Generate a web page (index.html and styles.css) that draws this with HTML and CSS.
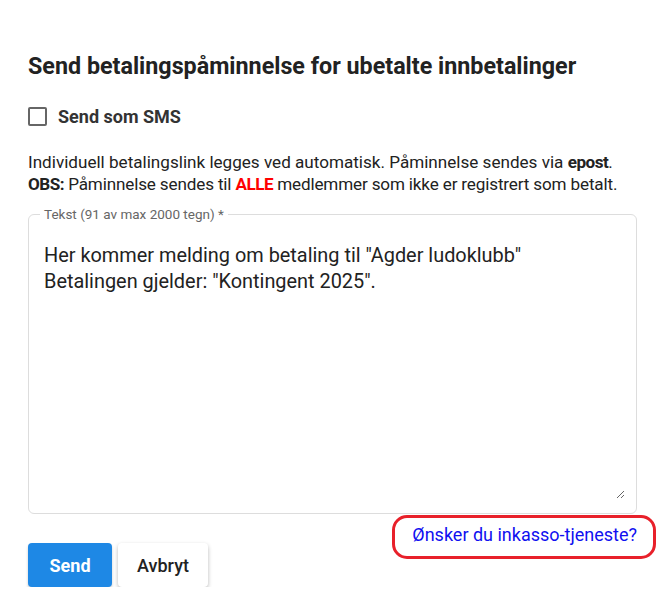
FILE: index.html
```html
<!DOCTYPE html>
<html lang="no">
<head>
<meta charset="utf-8">
<link rel="stylesheet" href="styles.css">
</head>
<body>
<div class="dialog">
  <h2 class="title">Send betalingspåminnelse for ubetalte innbetalinger</h2>
  <label class="check-row">
    <span class="checkbox"></span>
    <span class="check-label">Send som SMS</span>
  </label>
  <p class="info">Individuell betalingslink legges ved automatisk. Påminnelse sendes via <b>epost</b>.<br><span class="obs"><b>OBS:</b> Påminnelse sendes til <b class="red">ALLE</b> medlemmer som ikke er registrert som betalt.</span></p>
  <fieldset class="field">
    <legend class="legend">Tekst (91 av max 2000 tegn) *</legend>
    <textarea class="text">Her kommer melding om betaling til "Agder ludoklubb"
Betalingen gjelder: "Kontingent 2025".</textarea>
  </fieldset>
  <div class="link-row">
    <a class="link" href="#">Ønsker du inkasso-tjeneste?<span class="mark"></span></a>
  </div>
  <div class="buttons">
    <button class="btn btn-primary">Send</button>
    <button class="btn btn-plain">Avbryt</button>
  </div>
</div>
</body>
</html>
```
FILE: styles.css
```css
html, body {
  margin: 0;
  padding: 0;
  background: #fff;
}
body {
  font-family: Roboto, "Liberation Sans", sans-serif;
  color: #222;
}
.dialog {
  padding: 52px 28px 0 28px;
}
.title {
  margin: 0;
  font-size: 23.3px;
  line-height: 28px;
  font-weight: 700;
  color: #222;
}
.check-row {
  display: flex;
  align-items: center;
  gap: 11px;
  margin-top: 25px;
  height: 22px;
}
.checkbox {
  width: 15px;
  height: 15px;
  border: 2px solid #666;
  border-radius: 2px;
  flex: none;
}
.check-label {
  font-size: 18px;
  font-weight: 700;
  color: #333;
}
.info {
  margin: 24px 0 0 0;
  font-size: 17.1px;
  line-height: 22px;
  color: #222;
}
.info b {
  font-weight: 700;
  letter-spacing: -0.5px;
}
.obs {
  letter-spacing: -0.15px;
}
.red { color: #ff0000; }
.field {
  margin: 11px 0 0 0;
  padding: 0 11px 14px 11px;
  border: 1px solid #ddd;
  border-radius: 6px;
}
.legend {
  padding: 0 4px;
  font-size: 13.5px;
  line-height: 16px;
  color: #666;
}
.text {
  display: block;
  box-sizing: border-box;
  width: 100%;
  height: 277px;
  margin: 0;
  padding: 21px 4px 0 4px;
  border: none;
  outline: none;
  resize: vertical;
  font-family: Roboto, "Liberation Sans", sans-serif;
  font-size: 19.9px;
  line-height: 26px;
  color: #222;
  background: transparent;
}
.link-row {
  display: flex;
  justify-content: flex-end;
  margin-top: 11px;
  height: 18px;
}
.link {
  position: relative;
  font-size: 18px;
  line-height: 20px;
  color: #1010f0;
  text-decoration: none;
}
.mark {
  position: absolute;
  left: -20px;
  right: -19px;
  top: -10px;
  bottom: -16px;
  border: 3px solid #e8202a;
  border-radius: 15px;
  pointer-events: none;
}
.buttons {
  display: flex;
  gap: 6px;
}
.btn {
  height: 44px;
  border: none;
  border-radius: 4px;
  font-family: Roboto, "Liberation Sans", sans-serif;
  font-size: 18px;
  cursor: pointer;
}
.btn-primary {
  width: 84px;
  background: #1e88e5;
  color: #fff;
  font-weight: 700;
  box-shadow: 0 2px 3px rgba(0,0,0,0.2);
}
.btn-plain {
  width: 90px;
  background: #fff;
  color: #222;
  font-weight: 500;
  box-shadow: 0 2px 4px rgba(0,0,0,0.28);
}
```
